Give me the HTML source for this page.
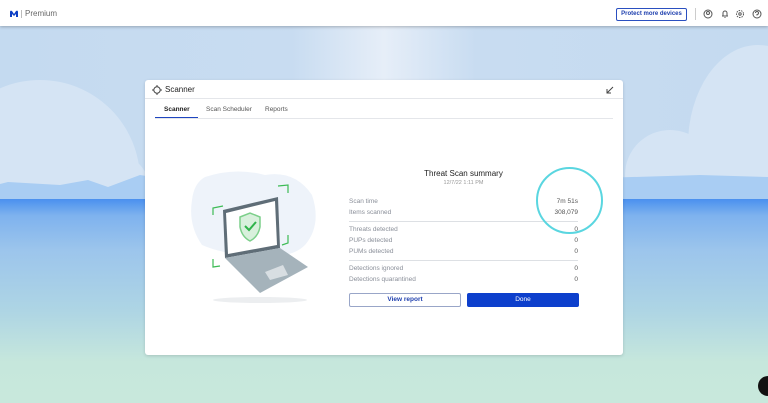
<!DOCTYPE html>
<html><head><style>
*{margin:0;padding:0;box-sizing:border-box}
body{width:768px;height:403px;overflow:hidden;position:relative;font-family:"Liberation Sans",sans-serif;background:#c8ddf1}
.sky{position:absolute;left:0;top:0;width:768px;height:200px;background:linear-gradient(90deg,#c4daf0 0%,#c8dcf1 38%,#e6eef8 50%,#c8dcf1 62%,#c4daf0 100%)}
.sea{position:absolute;left:0;top:199px;width:768px;height:204px;background:linear-gradient(180deg,#4a90ef 0%,#7eb2ee 8%,#9cc5ec 25%,#aed5e4 55%,#c6e7dc 80%,#c8e8dc 100%)}
.cloud{position:absolute;border-radius:50%;background:#d5e4f4}
.top{position:absolute;left:0;top:0;width:768px;height:26px;background:#fff;box-shadow:0 1px 3px rgba(0,0,0,.25)}
.card{position:absolute;left:145px;top:80px;width:478px;height:275px;background:#fff;border-radius:3px;box-shadow:0 1px 3px rgba(0,0,0,.15)}
.row{position:absolute;left:349px;width:229px;font-size:6.5px;color:#8a8f99}
.row b{position:absolute;right:0;top:0;font-weight:normal;color:#555}
.hr{position:absolute;left:349px;width:229px;height:1px;background:#dde0e4}
</style></head><body>
<div class="sky"></div>
<div class="cloud" style="left:-60px;top:80px;width:200px;height:200px"></div>
<div class="cloud" style="left:60px;top:150px;width:90px;height:80px"></div>
<div class="cloud" style="left:688px;top:45px;width:140px;height:200px"></div>
<div class="cloud" style="left:625px;top:130px;width:90px;height:90px"></div>
<svg style="position:absolute;left:0;top:160px" width="768" height="40"><path d="M0 24 L8 22 L60 25 L88 20 L108 27 L140 15 L165 19 L200 14 L260 16 L330 18 L400 16 L500 14 L600 18 L700 15 L768 17 L768 40 L0 40Z" fill="#a9cdf3"/></svg>
<div class="sea"></div>
<div class="top">
<svg style="position:absolute;left:9px;top:10px" width="10" height="8"><path d="M1 7 V2 Q1 0 3 1 L5 4 L7 1 Q9 0 9 2 V7 H7 V4 L5 6 L3 4 V7Z" fill="#0d3fc4"/></svg>
<div style="position:absolute;left:21px;top:10px;width:1px;height:8px;background:#bbb"></div>
<div style="position:absolute;left:25px;top:9px;font-size:8px;color:#666">Premium</div>
<div style="position:absolute;left:616px;top:8px;width:71px;height:13px;border:1px solid #2a4fc0;border-radius:2px;font-size:6px;color:#1e3fae;font-weight:bold;text-align:center;line-height:11px">Protect more devices</div>
<div style="position:absolute;left:695px;top:8px;width:1px;height:12px;background:#ccc"></div>
<svg style="position:absolute;left:703px;top:9px" width="60" height="10" fill="none" stroke="#555" stroke-width="1"><circle cx="5" cy="5" r="4"/><circle cx="5" cy="4" r="1.5"/><path d="M19 7h6M20 7V4a2 2 0 0 1 4 0v3M21.5 8.5h1"/><circle cx="37" cy="5" r="3.5" stroke-dasharray="1.5 1"/><circle cx="37" cy="5" r="1.2"/><circle cx="54" cy="5" r="4"/><path d="M52.5 4a1.5 1.5 0 1 1 1.5 1.5v1"/></svg>
</div>
<div class="card">
<svg style="position:absolute;left:7px;top:5px" width="10" height="10" fill="none" stroke="#444" stroke-width="1"><circle cx="5" cy="5" r="3.2"/><path d="M5 0v2M5 8v2M0 5h2M8 5h2"/></svg>
<div style="position:absolute;left:20px;top:5px;font-size:8px;color:#222">Scanner</div>
<svg style="position:absolute;left:461px;top:6px" width="8" height="8" fill="none" stroke="#444" stroke-width="1"><path d="M7 1L1 7M1 3v4h4"/></svg>
<div style="position:absolute;left:0;top:18px;width:478px;height:1px;background:#e4e6ea"></div>
<div style="position:absolute;left:19px;top:26px;font-size:6.5px;color:#222;font-weight:bold">Scanner</div>
<div style="position:absolute;left:61px;top:26px;font-size:6.5px;color:#555">Scan Scheduler</div>
<div style="position:absolute;left:120px;top:26px;font-size:6.5px;color:#555">Reports</div>
<div style="position:absolute;left:10px;top:37px;width:43px;height:2px;background:#1e45c0"></div>
<div style="position:absolute;left:10px;top:38px;width:458px;height:1px;background:#e4e6ea"></div>
</div>
<svg style="position:absolute;left:180px;top:165px" width="150" height="140">
<path d="M25 12 Q55 2 85 10 Q115 5 132 30 Q142 60 125 80 Q110 95 80 88 Q50 92 22 80 Q8 60 12 35 Q14 18 25 12Z" fill="#eef3fa"/>
<ellipse cx="80" cy="135" rx="47" ry="3" fill="#eceef0"/>
<path d="M43 45 L98 32 L100 83 L45 93Z" fill="#5f6d77"/>
<path d="M46 48 L95 36 L97 80 L48 89Z" fill="#fff"/>
<path d="M45 93 L100 83 L128 102 L80 128Z" fill="#a5b3bb"/>
<path d="M85 107 L103 100 L108 110 L90 115Z" fill="#d8dee2"/>
<path d="M60 52 L70 48 L80 52 L80 62 Q78 72 70 76 Q62 72 60 62Z" fill="#d8f0dc" stroke="#7ccf8a" stroke-width="1.5"/>
<path d="M65 61 L69 65 L76 57" fill="none" stroke="#2fb34a" stroke-width="2"/>
<path d="M98 21 L108 20 L108 28M108 70 L108 78 L102 80M33 50 L33 43 L43 41M33 94 L33 102 L40 101" fill="none" stroke="#3dbb55" stroke-width="1.2"/>
</svg>
<div style="position:absolute;left:349px;top:169px;width:229px;text-align:center;font-size:8px;color:#222">Threat Scan summary</div>
<div style="position:absolute;left:349px;top:180px;width:229px;text-align:center;font-size:5.5px;color:#999">12/7/22 1:11 PM</div>
<div class="row" style="top:198px">Scan time<b>7m 51s</b></div>
<div class="row" style="top:209px">Items scanned<b>308,079</b></div>
<div class="hr" style="top:221px"></div>
<div class="row" style="top:226px">Threats detected<b>0</b></div>
<div class="row" style="top:237px">PUPs detected<b>0</b></div>
<div class="row" style="top:248px">PUMs detected<b>0</b></div>
<div class="hr" style="top:260px"></div>
<div class="row" style="top:265px">Detections ignored<b>0</b></div>
<div class="row" style="top:276px">Detections quarantined<b>0</b></div>
<div style="position:absolute;left:349px;top:293px;width:112px;height:14px;border:1px solid #99a6c8;border-radius:2px;font-size:6.5px;color:#1e3fae;font-weight:bold;text-align:center;line-height:12px">View report</div>
<div style="position:absolute;left:467px;top:293px;width:112px;height:14px;background:#0d3fcc;border-radius:2px;font-size:6.5px;color:#fff;text-align:center;line-height:14px">Done</div>
<div style="position:absolute;left:536px;top:167px;width:67px;height:67px;border:2px solid #5ad6e0;border-radius:50%"></div>
<div style="position:absolute;left:758px;top:376px;width:20px;height:20px;border-radius:50%;background:#111"></div>
</body></html>
